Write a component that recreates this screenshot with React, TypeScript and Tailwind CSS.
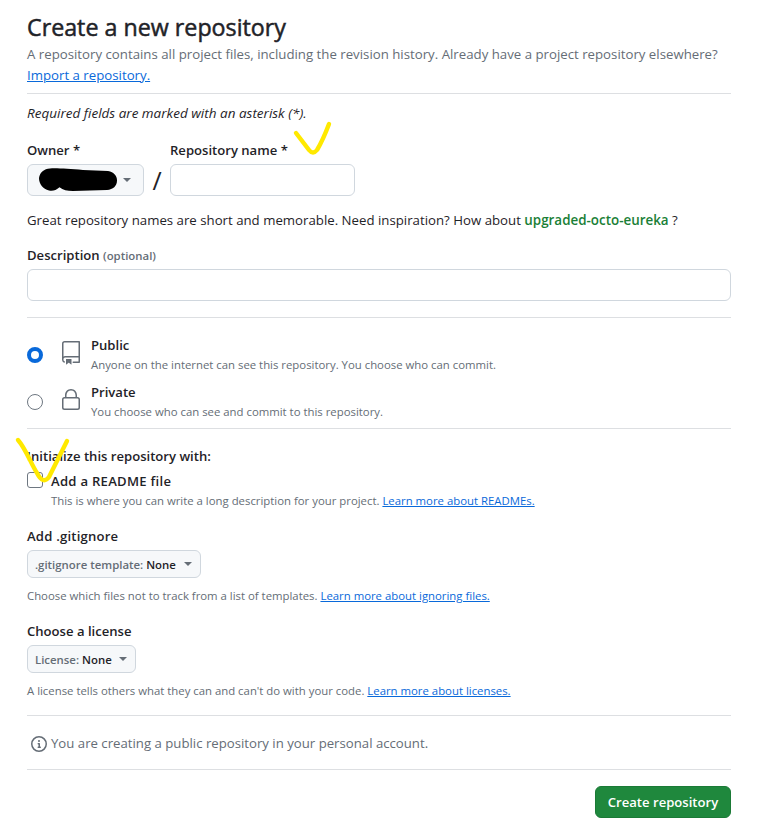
import type { ReactNode } from 'react'

function Divider() {
  return <div className="h-px shrink-0 bg-[#dddfe2]" />
}

function Caret({ className = '' }: { className?: string }) {
  return (
    <svg className={className} width="8" height="4" viewBox="0 0 8 4" fill="#656d76">
      <path d="M0 0h8L4 4Z" />
    </svg>
  )
}

function RepoIcon() {
  return (
    <svg width="24" height="24" viewBox="0 0 24 24" fill="#656d76">
      <path d="M3 2.75A2.75 2.75 0 0 1 5.75 0h14.5a.75.75 0 0 1 .75.75v20.5a.75.75 0 0 1-.75.75h-6a.75.75 0 0 1 0-1.5h5.25v-4H6A1.5 1.5 0 0 0 4.5 18v.75c0 .716.43 1.334 1.05 1.605a.75.75 0 0 1-.6 1.374A3.251 3.251 0 0 1 3 18.75ZM19.5 1.5H5.75c-.69 0-1.25.56-1.25 1.25v12.651A2.989 2.989 0 0 1 6 15h13.5Z" />
      <path d="M7 18.25a.25.25 0 0 1 .25-.25h5a.25.25 0 0 1 .25.25v5.01a.25.25 0 0 1-.397.201l-2.206-1.604a.25.25 0 0 0-.294 0L7.397 23.46a.25.25 0 0 1-.397-.2v-5.01Z" />
    </svg>
  )
}

function LockIcon() {
  return (
    <svg width="24" height="24" viewBox="0 0 24 24" fill="#656d76">
      <path d="M6 9V7.25C6 3.845 8.503 1 12 1s6 2.845 6 6.25V9h.5a2.5 2.5 0 0 1 2.5 2.5v8a2.5 2.5 0 0 1-2.5 2.5h-13A2.5 2.5 0 0 1 3 19.5v-8A2.5 2.5 0 0 1 5.5 9Zm-1.5 2.5v8a1 1 0 0 0 1 1h13a1 1 0 0 0 1-1v-8a1 1 0 0 0-1-1h-13a1 1 0 0 0-1 1Zm3-4.25V9h9V7.25c0-2.67-1.922-4.75-4.5-4.75-2.578 0-4.5 2.08-4.5 4.75Z" />
    </svg>
  )
}

function InfoIcon() {
  return (
    <svg width="16" height="16" viewBox="0 0 16 16" fill="#656d76">
      <path d="M0 8a8 8 0 1 1 16 0A8 8 0 0 1 0 8Zm8-6.5a6.5 6.5 0 1 0 0 13 6.5 6.5 0 0 0 0-13ZM6.5 7.75A.75.75 0 0 1 7.25 7h1a.75.75 0 0 1 .75.75v2.75h.25a.75.75 0 0 1 0 1.5h-2a.75.75 0 0 1 0-1.5h.25v-2h-.25a.75.75 0 0 1-.75-.75ZM8 6a1 1 0 1 1 0-2 1 1 0 0 1 0 2Z" />
    </svg>
  )
}

function Label({ children, className = '' }: { children: ReactNode; className?: string }) {
  return <div className={`h-[21px] text-[13.1px] font-semibold leading-[21px] ${className}`}>{children}</div>
}

function Note({ children }: { children: ReactNode }) {
  return <p className="h-[18px] text-[11.36px] leading-[18px] text-[#656d76]">{children}</p>
}

function Link({ children }: { children: ReactNode }) {
  return <a className="text-[#0969da] underline">{children}</a>
}

function SelectButton({ label, value, className }: { label: string; value: string; className: string }) {
  return (
    <button className={`flex h-7 items-center justify-between rounded-md border border-[#d0d7de] bg-[#f6f8fa] pl-[7px] pr-2 text-[11.4px] font-semibold ${className}`}>
      <span className="mt-px">
        <span className="text-[#656d76]">{label}</span> {value}
      </span>
      <Caret />
    </button>
  )
}

export default function App() {
  return (
    <div className="relative h-[827px] w-[758px] overflow-hidden whitespace-nowrap bg-white font-['Open_Sans','Noto_Sans',sans-serif] text-[#1f2328]">
      <main className="ml-[27px] flex w-[704px] flex-col pt-[9px]">
        <h1 className="h-[35px] text-[23.25px] font-normal leading-9 [-webkit-text-stroke:0.5px_#1f2328]">Create a new repository</h1>
        <p className="h-[42px] text-[13.24px] leading-[21px] text-[#656d76]">
          A repository contains all project files, including the revision history. Already have a project repository elsewhere?
          <br />
          <Link>Import a repository.</Link>
        </p>
        <div className="h-[7px]" />
        <Divider />
        <p className="mt-[9px] h-[21px] text-[13.5px] italic leading-[21px]">Required fields are marked with an asterisk (*).</p>

        <div className="mt-4 flex">
          <div className="w-[117px]">
            <Label>Owner *</Label>
            <button className="mt-[3px] flex h-8 w-[117px] items-center rounded-md border border-[#d0d7de] bg-[#f6f8fa] pl-[11px]">
              <svg width="78" height="24" viewBox="0 0 78 24">
                <path d="M11 0.5C18 0 30 1 44 2L69 3C75 4 78 8 78 12.500C78 18 74 21.500 68 22L34 23C28 23 24 22 20.500 19.200C17 22 14 23.500 10 22.500C4 21 0 16 0 10C1 4 5 1 11 .5Z" fill="#000" />
              </svg>
              <Caret className="ml-[6px]" />
            </button>
          </div>
          <div className="flex w-[26px] items-end justify-center text-[25px] leading-[31px]">/</div>
          <div>
            <Label>Repository name *</Label>
            <input className="mt-[3px] block h-8 w-[185px] rounded-md border border-[#d0d7de]" />
          </div>
        </div>

        <p className="mt-[14px] h-[21px] text-[13.24px] leading-[21px]">
          Great repository names are short and memorable. Need inspiration? How about{' '}
          <span className="text-[13.4px] font-semibold text-[#1a7f37]">upgraded-octo-eureka</span> ?
        </p>

        <div className="mt-[14px]">
          <Label>
            Description <span className="text-[11.4px] text-[#656d76]">(optional)</span>
          </Label>
          <input className="mt-[3px] block h-8 w-full rounded-md border border-[#d0d7de]" />
        </div>

        <div className="h-4" />
        <Divider />

        <div className="mt-[17px] flex h-[47px]">
          <span className="mt-3 h-4 w-4 rounded-full border-4 border-[#0969da] bg-white" />
          <span className="ml-4 mt-[6px]"><RepoIcon /></span>
          <div className="ml-2">
            <Label>Public</Label>
            <Note>Anyone on the internet can see this repository. You choose who can commit.</Note>
          </div>
        </div>
        <div className="flex h-[46px]">
          <span className="mt-3 h-4 w-4 rounded-full border border-[#6e7781] bg-white" />
          <span className="ml-4 mt-[6px]"><LockIcon /></span>
          <div className="ml-2">
            <Label>Private</Label>
            <Note>You choose who can see and commit to this repository.</Note>
          </div>
        </div>
        <Divider />

        <div className="mt-[17px]">
          <Label>Initialize this repository with:</Label>
        </div>
        <div className="mt-1 flex">
          <span className="mt-px h-4 w-4 rounded-[3px] border border-[#6e7781] bg-white" />
          <div className="ml-2">
            <Label className="tracking-[0.27px]">Add a README file</Label>
            <Note>
              This is where you can write a long description for your project. <Link>Learn more about READMEs.</Link>
            </Note>
          </div>
        </div>

        <div className="mt-4">
          <Label className="tracking-[0.2px]">Add .gitignore</Label>
          <SelectButton label=".gitignore template:" value="None" className="mb-[9px] mt-[3px] w-[174px]" />
          <Note>
            Choose which files not to track from a list of templates. <Link>Learn more about ignoring files.</Link>
          </Note>
        </div>

        <div className="mt-4">
          <Label>Choose a license</Label>
          <SelectButton label="License:" value="None" className="mb-[9px] mt-[3px] w-[109px]" />
          <Note>
            A license tells others what they can and can't do with your code. <Link>Learn more about licenses.</Link>
          </Note>
        </div>

        <div className="h-[15px]" />
        <Divider />
        <div className="flex h-[53px] items-center gap-1 pl-1 pt-[3px] text-[13.2px] text-[#656d76]">
          <InfoIcon />
          <span className="mb-px">You are creating a public repository in your personal account.</span>
        </div>
        <Divider />
        <button className="mt-4 h-8 w-[136px] self-end rounded-md border border-[#1b7a36] bg-[#1f883d] pt-0.5 text-[13.1px] font-semibold text-white">
          Create repository
        </button>
      </main>

      {/* highlighter marks drawn over the form */}
      <svg className="pointer-events-none absolute inset-0" width="758" height="827" fill="none" stroke="#ffe900" strokeWidth="4.4" strokeLinecap="round" strokeLinejoin="round">
        <path d="M296 133L309 150Q313 155 317 150Q323 140 329 124" />
        <path d="M18 440C26 449 31 464 37 473Q43 485 49 477C55 465 61 453 67 441" />
      </svg>
    </div>
  )
}
